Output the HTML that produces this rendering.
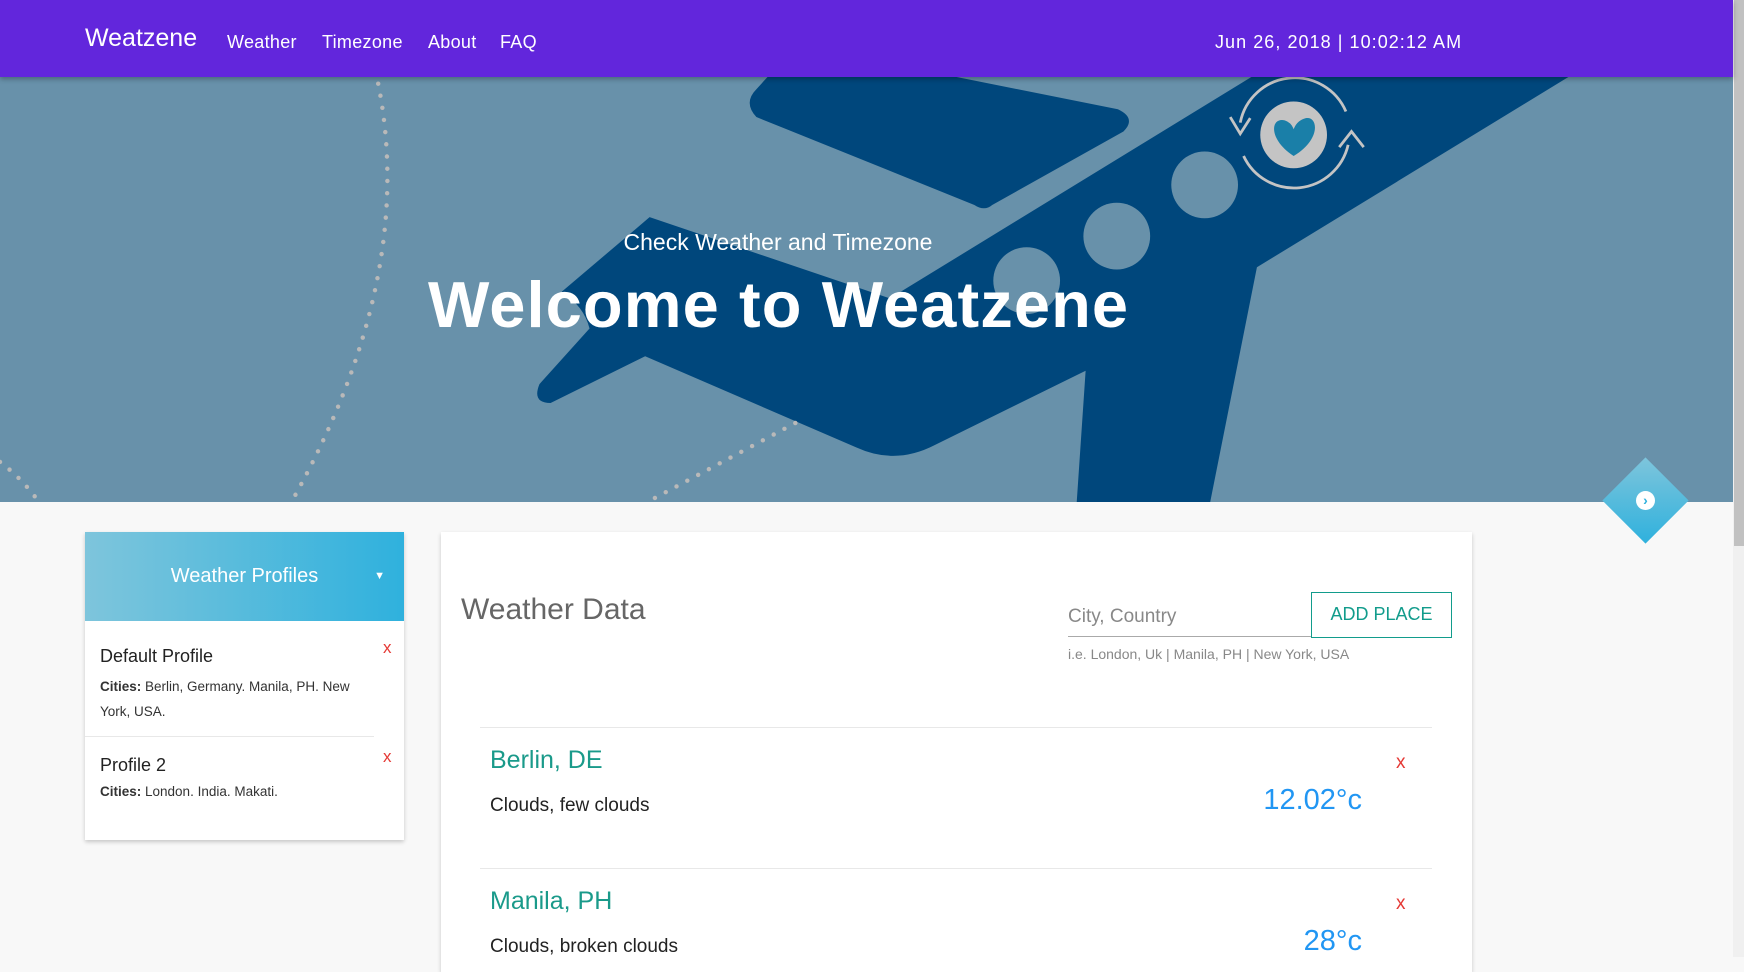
<!DOCTYPE html>
<html><head><meta charset="utf-8"><style>
*{margin:0;padding:0;box-sizing:border-box}
body{width:1744px;height:957px;overflow:hidden;background:#f8f8f8;font-family:"Liberation Sans",sans-serif;position:relative}
.a{position:absolute;white-space:nowrap}
nav{position:absolute;left:0;top:0;width:1733px;height:77px;background:#6226dc;box-shadow:0 2px 5px rgba(0,0,0,.3);z-index:5;color:#fff}
.sb{position:absolute;left:1733px;top:0;width:11px;height:957px;background:#f0f0f0}
.sb div{position:absolute;left:1px;top:0;width:10px;height:546px;background:#c1c1c1}
.hero{position:absolute;left:0;top:77px;width:1733px;height:425px;background:#6891aa;overflow:hidden}
.card{position:absolute;background:#fff;box-shadow:0 2px 4px rgba(0,0,0,.2)}
.x{color:#e53935;font-size:17px}
</style></head><body>
<nav>
<div class="a" style="left:85px;top:24px;font-size:25px">Weatzene</div>
<div class="a" style="left:227px;top:32px;font-size:18px;letter-spacing:.3px">Weather</div>
<div class="a" style="left:322px;top:32px;font-size:18px;letter-spacing:.3px">Timezone</div>
<div class="a" style="left:428px;top:32px;font-size:18px;letter-spacing:.3px">About</div>
<div class="a" style="left:500px;top:32px;font-size:18px;letter-spacing:.3px">FAQ</div>
<div class="a" style="left:1215px;top:32px;font-size:18px;letter-spacing:1.05px">Jun 26, 2018 | 10:02:12 AM</div>
</nav>
<div class="hero">
<svg width="1733" height="425" viewBox="0 69 1558 382" preserveAspectRatio="none" style="position:absolute;left:0;top:0">
<g fill="#00477c">
<path d="M1125,69 L1410,69 L1130,240 L1088,451 L968,451 L976,333 L840,400 Q805,418 770,402 L580,320 L495,362 Q478,362 485,345 L530,295 Q525,275 505,262 L584,195 L800,268 Z"/>
<path d="M690,69 L860,69 L1005,98 Q1022,106 1010,118 L892,184 Q885,190 876,184 L680,105 Q668,92 680,80 Z"/>
</g>
<g fill="#6891aa"><circle cx="923" cy="252" r="30"/><circle cx="1004" cy="212" r="30"/><circle cx="1083" cy="166" r="30"/></g>
<circle cx="1163" cy="121" r="30" fill="#c4c4c4"/>
<path d="M1163,140 C1140,125 1142,105 1155,108 Q1161,110 1163,116 Q1166,108 1174,106 C1185,104 1188,125 1163,140 Z" fill="#1a7fa8"/>
<path d="M1115,110 A50,50 0 0 1 1210,100" stroke="#c4c4c4" stroke-width="2.5" fill="none"/>
<path d="M1212,130 A50,50 0 0 1 1118,140" stroke="#c4c4c4" stroke-width="2.5" fill="none"/>
<path d="M1106,105 L1115,120 L1124,106" stroke="#c4c4c4" stroke-width="2.5" fill="none"/>
<path d="M1204,132 L1215,118 L1226,132" stroke="#c4c4c4" stroke-width="2.5" fill="none"/>
<g stroke="#b9b9b9" stroke-width="4" stroke-linecap="round" stroke-dasharray="0 11" fill="none">
<path d="M340,75 Q375,250 262,451"/>
<path d="M0,415 Q20,430 35,451"/>
<path d="M715,380 Q640,420 582,451"/>
</g>
</svg>
<div class="a" style="left:778px;top:152px;transform:translateX(-50%);color:#fff;font-size:23px">Check Weather and Timezone</div>
<div class="a" style="left:428px;top:190px;color:#fff;font-size:65px;font-weight:bold;letter-spacing:1.1px">Welcome to Weatzene</div>
</div>
<div class="a" style="left:1602px;top:457px;width:87px;height:87px"><div style="position:absolute;left:13px;top:13px;width:61px;height:61px;transform:rotate(45deg);background:linear-gradient(135deg,#7ec5dc,#2fb1dd)"></div><div style="position:absolute;left:34px;top:34px;width:19px;height:19px;border-radius:50%;background:#fff;color:#2fb1dd;font-size:14px;line-height:19px;text-align:center;font-weight:bold">›</div></div>

<div class="card" style="left:85px;top:532px;width:319px;height:308px">
<div style="height:89px;background:linear-gradient(90deg,#7ec5dc,#2fb1dd);color:#fff;font-size:20px;text-align:center;line-height:89px;position:relative">Weather Profiles<span style="position:absolute;right:19px;top:0;font-size:11px">▼</span></div>
<div class="a" style="left:15px;top:114px;font-size:18px;color:#222">Default Profile</div>
<div class="a x" style="left:298px;top:106px">x</div>
<div style="position:absolute;left:15px;top:142px;width:260px;font-size:13.5px;line-height:25px;color:#333"><b>Cities:</b> Berlin, Germany. Manila, PH. New York, USA.</div>
<div style="position:absolute;left:0;top:204px;width:289px;border-top:1px solid #e8e8e8"></div>
<div class="a" style="left:15px;top:223px;font-size:18px;color:#222">Profile 2</div>
<div class="a x" style="left:298px;top:215px">x</div>
<div class="a" style="left:15px;top:252px;font-size:13.5px;color:#333"><b>Cities:</b> London. India. Makati.</div>
</div>

<div class="card" style="left:441px;top:532px;width:1031px;height:440px">
<div class="a" style="left:20px;top:61px;font-size:30px;color:#666">Weather Data</div>
<div class="a" style="left:627px;top:74px;font-size:19px;color:#888">City, Country</div>
<div style="position:absolute;left:627px;top:104px;width:243px;border-top:1px solid #aaa"></div>
<div class="a" style="left:870px;top:60px;width:141px;height:46px;border:1.5px solid #129c8c;color:#129c8c;font-size:18px;line-height:43px;text-align:center">ADD PLACE</div>
<div class="a" style="left:627px;top:114px;font-size:14px;color:#888">i.e. London, Uk | Manila, PH | New York, USA</div>
<div style="position:absolute;left:39px;top:195px;width:952px;border-top:1px solid #e8e8e8"></div>
<div class="a" style="left:49px;top:214px;font-size:25px;color:#1a9a8a">Berlin, DE</div>
<div class="a x" style="left:955px;top:220px;font-size:19px">x</div>
<div class="a" style="left:49px;top:263px;font-size:19px;color:#222">Clouds, few clouds</div>
<div class="a" style="right:110px;top:252px;font-size:29px;color:#2196f3">12.02°c</div>
<div style="position:absolute;left:39px;top:336px;width:952px;border-top:1px solid #e8e8e8"></div>
<div class="a" style="left:49px;top:355px;font-size:25px;color:#1a9a8a">Manila, PH</div>
<div class="a x" style="left:955px;top:361px;font-size:19px">x</div>
<div class="a" style="left:49px;top:404px;font-size:19px;color:#222">Clouds, broken clouds</div>
<div class="a" style="right:110px;top:393px;font-size:29px;color:#2196f3">28°c</div>
</div>
<div class="sb"><div></div></div>
</body></html>
